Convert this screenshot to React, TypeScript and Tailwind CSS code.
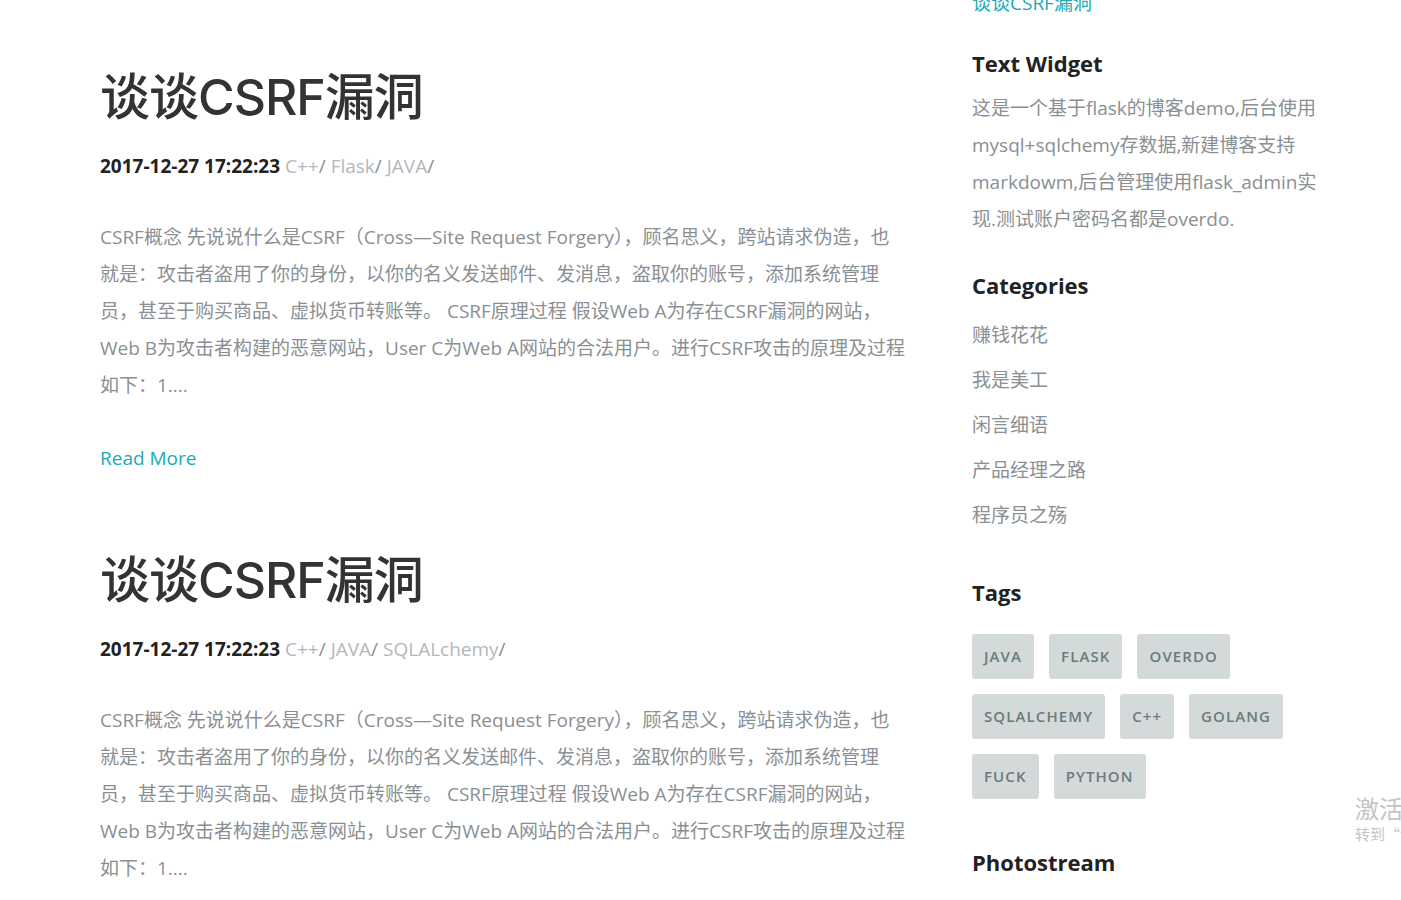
const body = 'CSRF概念 先说说什么是CSRF（Cross—Site Request Forgery），顾名思义，跨站请求伪造，也就是：攻击者盗用了你的身份，以你的名义发送邮件、发消息，盗取你的账号，添加系统管理员，甚至于购买商品、虚拟货币转账等。 CSRF原理过程 假设Web A为存在CSRF漏洞的网站，Web B为攻击者构建的恶意网站，User C为Web A网站的合法用户。进行CSRF攻击的原理及过程如下：1....'

const posts = [
  { title: '谈谈CSRF漏洞', date: '2017-12-27 17:22:23', tags: ['C++', 'Flask', 'JAVA'] },
  { title: '谈谈CSRF漏洞', date: '2017-12-27 17:22:23', tags: ['C++', 'JAVA', 'SQLALchemy'] },
]

const categories = ['赚钱花花', '我是美工', '闲言细语', '产品经理之路', '程序员之殇']
const tags = ['java', 'flask', 'overdo', 'sqlalchemy', 'c++', 'golang', 'fuck', 'python']

const sans = "font-['Open_Sans','Noto_Sans_CJK_SC',sans-serif]"

const Post = ({ title, date, tags }: (typeof posts)[number]) => (
  <article className="mb-[79px]">
    <h2 className="font-['Inter','Noto_Sans_CJK_SC',sans-serif] text-[50px] font-medium leading-[60px] tracking-[-1px] text-[#333]">
      {title}
    </h2>
    <p className="mt-[26px] text-[19px] leading-[26px]">
      <span className="font-bold text-[#222]">{date}</span>{' '}
      {tags.map((t) => (
        <span key={t}>
          <a className="text-[#b3b7bb]">{t}</a>
          <span className="text-[#8a8f93]">/ </span>
        </span>
      ))}
    </p>
    <p className="mt-[40px] text-[19px] leading-[37px] text-[#8a8f93]">{body}</p>
    <a className="mt-[41px] block text-[19px] leading-[26px] text-[#20aab8]">Read More</a>
  </article>
)

const Heading = ({ children, className }: { children: string; className?: string }) => (
  <h3 className={`text-[22px] font-bold leading-[30px] text-[#222] ${className ?? ''}`}>{children}</h3>
)

export default function App() {
  return (
    <div className={`relative h-[900px] overflow-hidden bg-white ${sans}`}>
      <div className="flex">
        <main className="ml-[100px] w-[805px] pt-[67px]">
          {posts.map((p, i) => (
            <Post key={i} {...p} />
          ))}
        </main>

        <aside className="ml-[67px] mt-[-15px] w-[350px]">
          <a className="block text-[19px] leading-[37px] text-[#20aab8]">谈谈CSRF漏洞</a>

          <Heading className="mt-[26px]">Text Widget</Heading>
          <p className="mt-[12px] text-[19px] leading-[37px] text-[#8a8f93]">
            这是一个基于flask的博客demo,后台使用mysql+sqlchemy存数据,新建博客支持markdowm,后台管理使用flask_admin实现.测试账户密码名都是overdo.
          </p>

          <Heading className="mt-[32px]">Categories</Heading>
          <ul className="mt-[13px]">
            {categories.map((c) => (
              <li key={c} className="text-[19px] leading-[45px] text-[#8a8f93]">
                {c}
              </li>
            ))}
          </ul>

          <Heading className="mt-[39px]">Tags</Heading>
          <div className="mt-[27px] flex flex-wrap gap-[15px]">
            {tags.map((t) => (
              <span
                key={t}
                className="flex h-[45px] items-center rounded-[3px] bg-[#d4dada] px-3 text-[15px] font-semibold uppercase tracking-[1.1px] text-[#6a7b7b]"
              >
                {t}
              </span>
            ))}
          </div>

          <Heading className="mt-[48px]">Photostream</Heading>
        </aside>
      </div>

      <div className="absolute left-[1355px] top-[793px] whitespace-nowrap font-['Noto_Sans_CJK_SC',sans-serif] text-[#c4c4c4]">
        <p className="text-[24px] leading-[30px]">激活 Windows</p>
        <p className="text-[15px] leading-[22px]">转到“设置”以激活 Windows。</p>
      </div>
    </div>
  )
}
